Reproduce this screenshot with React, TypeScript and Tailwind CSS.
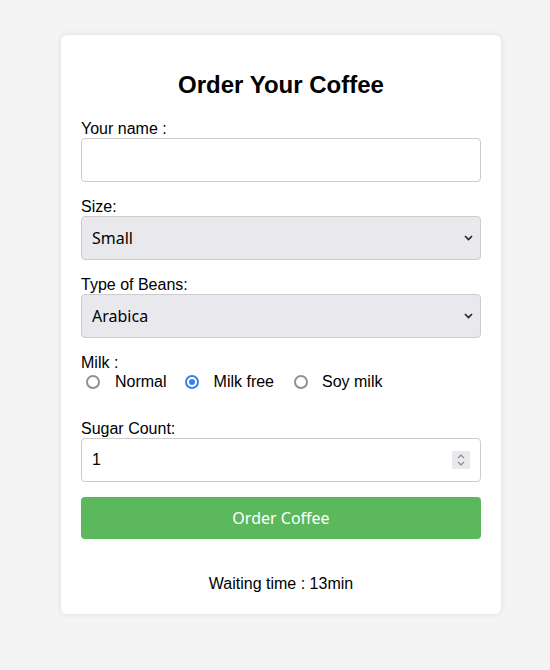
function Chevron() {
  return (
    <svg className="pointer-events-none absolute right-[8px] top-1/2 -mt-[3px]" width="9" height="6" viewBox="0 0 9 6">
      <path d="M1 1l3.5 3.5L8 1" fill="none" stroke="#222" strokeWidth="1.6" />
    </svg>
  );
}

function Radio({ checked }: { checked?: boolean }) {
  return checked ? (
    <span className="flex size-[14px] shrink-0 items-center justify-center rounded-full border-2 border-[#3b82e6] bg-white">
      <span className="block size-[6px] rounded-full bg-[#3b82e6]" />
    </span>
  ) : (
    <span className="block size-[14px] shrink-0 rounded-full border-2 border-[#8f8f9d] bg-white" />
  );
}

export default function App() {
  const selectCls =
    "mb-4 block h-[44px] w-full appearance-none rounded border border-[#ccc] bg-[#e9e9ed] px-[10px] font-['Noto_Sans',sans-serif] text-[16px] text-black";
  return (
    <div className="min-h-[670px] bg-[#f4f4f4] pt-[35px] pl-[12px] font-['Liberation_Sans',Arial,sans-serif] text-black">
      <div className="mx-auto w-[440px] rounded-md bg-white px-5 pt-[36px] pb-[21px] shadow-[0_0_6px_rgba(0,0,0,0.1)]">
        <h2 className="mb-[21px] text-center text-[24px] font-bold leading-[28px]">Order Your Coffee</h2>

        <label className="block text-[16px] leading-[18px]">Your name :</label>
        <input
          type="text"
          className="mb-4 block h-[44px] w-full rounded border border-[#ccc] px-[10px] text-[16px]"
        />

        <label className="block text-[16px] leading-[18px]">Size:</label>
        <div className="relative">
          <select defaultValue="small" className={selectCls}>
            <option value="small">Small</option>
            <option value="medium">Medium</option>
            <option value="large">Large</option>
          </select>
          <div className="pointer-events-none absolute inset-x-0 top-0 h-[44px]">
            <Chevron />
          </div>
        </div>

        <label className="block text-[16px] leading-[18px]">Type of Beans:</label>
        <div className="relative">
          <select defaultValue="arabica" className={selectCls}>
            <option value="arabica">Arabica</option>
            <option value="robusta">Robusta</option>
          </select>
          <div className="pointer-events-none absolute inset-x-0 top-0 h-[44px]">
            <Chevron />
          </div>
        </div>

        <label className="block text-[16px] leading-[18px]">Milk :</label>
        <div className="mb-[29px] flex h-[19px] items-center text-[16px]">
          <span className="ml-[5px] mr-[15px] flex"><Radio /></span>
          <span className="mr-[18px]">Normal</span>
          <span className="mr-[15px] flex"><Radio checked /></span>
          <span className="mr-[20px]">Milk free</span>
          <span className="mr-[14px] flex"><Radio /></span>
          <span>Soy milk</span>
        </div>

        <label className="block text-[16px] leading-[18px]">Sugar Count:</label>
        <div className="relative mb-[15px] flex h-[44px] w-full items-center rounded border border-[#ccc] pl-[10px] pr-[10px]">
          <input
            type="text"
            defaultValue="1"
            className="h-full flex-1 text-[16px] outline-none"
          />
          <span className="flex h-[18px] w-[18px] flex-col items-center justify-center gap-[2px] bg-[#e9e9ed]">
            <svg width="8" height="5" viewBox="0 0 8 5">
              <path d="M1 4l3-3 3 3" fill="none" stroke="#8a8a8a" strokeWidth="1.2" />
            </svg>
            <svg width="8" height="5" viewBox="0 0 8 5">
              <path d="M1 1l3 3 3-3" fill="none" stroke="#8a8a8a" strokeWidth="1.2" />
            </svg>
          </span>
        </div>

        <button className="block h-[42px] w-full rounded bg-[#5cb85c] font-['Noto_Sans',sans-serif] text-[16px] text-white">
          Order Coffee
        </button>

        <p className="mt-[36px] text-center text-[16px] leading-[18px]">Waiting time : 13min</p>
      </div>
    </div>
  );
}
